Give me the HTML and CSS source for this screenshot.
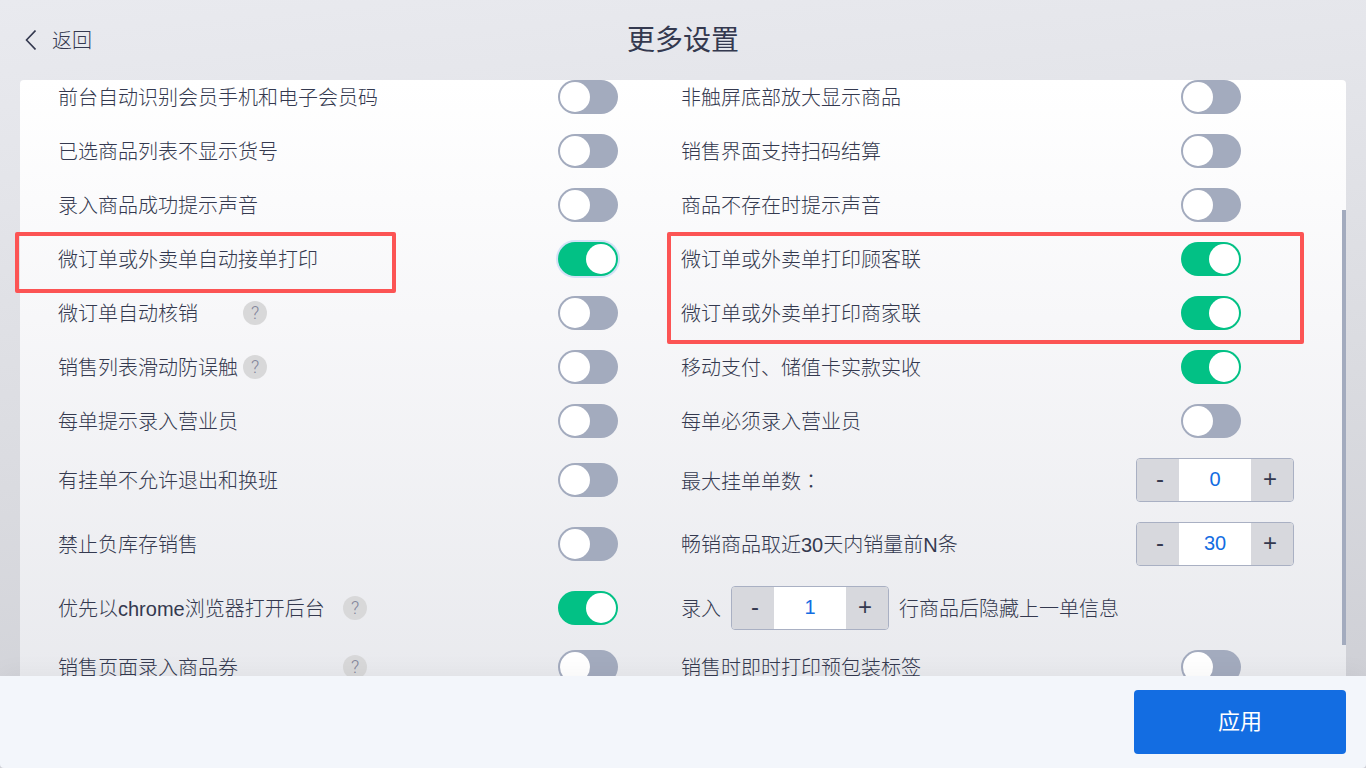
FILE: index.html
```html
<!DOCTYPE html>
<html lang="zh-CN">
<head>
    <meta charset="UTF-8">
    <meta name="viewport" content="width=device-width, initial-scale=1.0">
    <title>更多设置</title>
    <link rel="stylesheet" href="styles.css">
</head>
<body>
    <header class="header">
        <a href="#" class="back">
            <svg class="back-icon" width="12" height="20" viewBox="0 0 12 20" fill="none" stroke="currentColor" stroke-width="1.6">
                <path d="M11.5 0.5 L2.5 10 L11.5 19.5"/>
            </svg>
            <span>返回</span>
        </a>
        <h1>更多设置</h1>
    </header>

    <main class="panel">
        <div class="scroller">
            <div class="settings">
                <div class="setting">
                    <label for="memberCode">前台自动识别会员手机和电子会员码</label>
                    <input type="checkbox" class="toggle" id="memberCode">
                </div>
                <div class="setting">
                    <label for="enlarge">非触屏底部放大显示商品</label>
                    <input type="checkbox" class="toggle" id="enlarge">
                </div>

                <div class="setting">
                    <label for="hideNo">已选商品列表不显示货号</label>
                    <input type="checkbox" class="toggle" id="hideNo">
                </div>
                <div class="setting">
                    <label for="scanPay">销售界面支持扫码结算</label>
                    <input type="checkbox" class="toggle" id="scanPay">
                </div>

                <div class="setting">
                    <label for="soundOk">录入商品成功提示声音</label>
                    <input type="checkbox" class="toggle" id="soundOk">
                </div>
                <div class="setting">
                    <label for="soundMissing">商品不存在时提示声音</label>
                    <input type="checkbox" class="toggle" id="soundMissing">
                </div>

                <div class="setting">
                    <label for="autoPrint">微订单或外卖单自动接单打印</label>
                    <input type="checkbox" class="toggle focused" id="autoPrint" checked>
                </div>
                <div class="setting">
                    <label for="printCustomer">微订单或外卖单打印顾客联</label>
                    <input type="checkbox" class="toggle" id="printCustomer" checked>
                </div>

                <div class="setting">
                    <label for="autoVerify" class="label-short">微订单自动核销</label>
                    <button type="button" class="help">?</button>
                    <input type="checkbox" class="toggle" id="autoVerify">
                </div>
                <div class="setting">
                    <label for="printMerchant">微订单或外卖单打印商家联</label>
                    <input type="checkbox" class="toggle" id="printMerchant" checked>
                </div>

                <div class="setting">
                    <label for="swipeGuard" class="label-short">销售列表滑动防误触</label>
                    <button type="button" class="help">?</button>
                    <input type="checkbox" class="toggle" id="swipeGuard">
                </div>
                <div class="setting">
                    <label for="realPay">移动支付、储值卡实款实收</label>
                    <input type="checkbox" class="toggle" id="realPay" checked>
                </div>

                <div class="setting">
                    <label for="clerkTip">每单提示录入营业员</label>
                    <input type="checkbox" class="toggle" id="clerkTip">
                </div>
                <div class="setting">
                    <label for="clerkMust">每单必须录入营业员</label>
                    <input type="checkbox" class="toggle" id="clerkMust">
                </div>

                <div class="setting">
                    <label for="noExit">有挂单不允许退出和换班</label>
                    <input type="checkbox" class="toggle" id="noExit">
                </div>
                <div class="setting setting-wide">
                    <label for="maxHold">最大挂单单数<span class="colon" lang="ja">：</span></label>
                    <div class="stepper">
                        <button type="button">-</button>
                        <input type="text" id="maxHold" value="0">
                        <button type="button">+</button>
                    </div>
                </div>

                <div class="setting">
                    <label for="noNegative">禁止负库存销售</label>
                    <input type="checkbox" class="toggle" id="noNegative">
                </div>
                <div class="setting setting-wide">
                    <label for="topN">畅销商品取近30天内销量前N条</label>
                    <div class="stepper">
                        <button type="button">-</button>
                        <input type="text" id="topN" value="30">
                        <button type="button">+</button>
                    </div>
                </div>

                <div class="setting">
                    <label for="chrome" class="label-long">优先以chrome浏览器打开后台</label>
                    <button type="button" class="help">?</button>
                    <input type="checkbox" class="toggle" id="chrome" checked>
                </div>
                <div class="setting setting-inline">
                    <label for="hideAfter">录入</label>
                    <div class="stepper">
                        <button type="button">-</button>
                        <input type="text" id="hideAfter" value="1">
                        <button type="button">+</button>
                    </div>
                    <label for="hideAfter">行商品后隐藏上一单信息</label>
                </div>

                <div class="setting">
                    <label for="coupon" class="label-long">销售页面录入商品券</label>
                    <button type="button" class="help">?</button>
                    <input type="checkbox" class="toggle" id="coupon">
                </div>
                <div class="setting">
                    <label for="packLabel">销售时即时打印预包装标签</label>
                    <input type="checkbox" class="toggle" id="packLabel">
                </div>
            </div>
        </div>
        <div class="scrollbar"></div>
        <div class="mark mark-left"></div>
        <div class="mark mark-right"></div>
    </main>

    <footer class="footer">
        <button type="button" class="apply">应用</button>
    </footer>
</body>
</html>
```
FILE: styles.css
```css
* {
    box-sizing: border-box;
}

html {
    background: #d0d2d8;
}

body {
    margin: 0;
    height: 100vh;
    display: flex;
    flex-direction: column;
    overflow: hidden;
    font-family: "Liberation Sans", "Noto Sans CJK SC", sans-serif;
    font-size: 20px;
    font-weight: 300;
    line-height: 30px;
    color: #34394f;
    background: linear-gradient(175deg, #e9eaef 0%, #e4e5ea 20%, #dadbe0 55%, #cfd0d6 90%);
}

button,
input {
    font-family: inherit;
    font-size: inherit;
    font-weight: inherit;
    margin: 0;
    padding: 0;
    border: none;
}

.header {
    flex: none;
    height: 80px;
    padding: 2px 24px 0;
    display: grid;
    grid-template-columns: 1fr auto 1fr;
    align-items: center;
}

.header h1 {
    margin: 0;
    font-size: 28px;
    font-weight: 400;
}

.back {
    display: flex;
    align-items: center;
    gap: 16px;
    color: #34394f;
    text-decoration: none;
}

.back-icon {
    margin-bottom: 2px;
}

.panel {
    position: relative;
    flex: 1;
    min-height: 0;
    margin: 0 20px;
}

.scroller {
    height: 100%;
    overflow: hidden;
    border-radius: 4px 4px 0 0;
    background: linear-gradient(#ffffff, #f7f7f9 40%, #e9eaee);
}

/* list is scrolled a little past the top edge */
.settings {
    display: grid;
    grid-template-columns: 1fr 1fr;
    margin-top: -10px;
    padding: 0 42px 0 38px;
}

.setting {
    display: flex;
    align-items: center;
    padding: 10px 63px 10px 0;
    white-space: nowrap;
}

.setting label {
    padding-top: 2px;
}

.setting-wide {
    justify-content: space-between;
    padding-right: 10px;
}

.setting-inline {
    gap: 10px;
    padding-right: 0;
}

.label-short {
    width: 185px;
}

.label-long {
    width: 285px;
}

.colon {
    font-family: "Noto Sans CJK JP", sans-serif;
}

.help {
    width: 24px;
    height: 24px;
    border-radius: 50%;
    background: #d8d8d9;
    color: #80849a;
    font-family: Roboto, sans-serif;
    font-size: 18px;
    line-height: 24px;
}

.toggle {
    appearance: none;
    flex: none;
    width: 60px;
    height: 34px;
    margin-left: auto;
    padding: 2px;
    border-radius: 17px;
    background: #a3abbe;
}

.toggle::before {
    content: "";
    display: block;
    width: 30px;
    height: 30px;
    border-radius: 50%;
    background: #fff;
}

.toggle:checked {
    background: #02c185;
}

.toggle:checked::before {
    margin-left: 26px;
}

.toggle.focused {
    box-shadow: 0 0 0 2px #d3e2f6;
}

.stepper {
    display: flex;
    width: 158px;
    height: 44px;
    border: 1px solid #a9b0c3;
    border-radius: 4px;
    overflow: hidden;
}

.stepper button {
    width: 42px;
    padding-bottom: 2px;
    background: #d7d8dd;
    color: #34394f;
    font-size: 24px;
}

.stepper button:first-child {
    padding-left: 4px;
}

.stepper button:last-child {
    padding-right: 4px;
}

.stepper input {
    width: 72px;
    padding-bottom: 2px;
    background: #fff;
    color: #136de2;
    text-align: center;
}

.scrollbar {
    position: absolute;
    right: 0;
    top: 130px;
    width: 4px;
    height: 73%;
    background: #a3abbe;
}

.mark {
    position: absolute;
    top: 152px;
    border: 4px solid #fc5454;
    border-radius: 2px;
}

.mark-left {
    left: -5px;
    width: 381px;
    height: 61px;
}

.mark-right {
    left: calc(50% - 16px);
    right: 42px;
    height: 112px;
}

.footer {
    position: relative;
    flex: none;
    display: flex;
    justify-content: flex-end;
    padding: 14px 20px;
    border-radius: 0 0 4px 4px;
    background: #f3f6fb;
    box-shadow: 0 -4px 24px rgba(0, 0, 0, 0.04);
}

.apply {
    width: 212px;
    height: 64px;
    padding-bottom: 6px;
    border-radius: 4px;
    background: #136de2;
    color: #fff;
    font-size: 22px;
    font-weight: 400;
}
```
